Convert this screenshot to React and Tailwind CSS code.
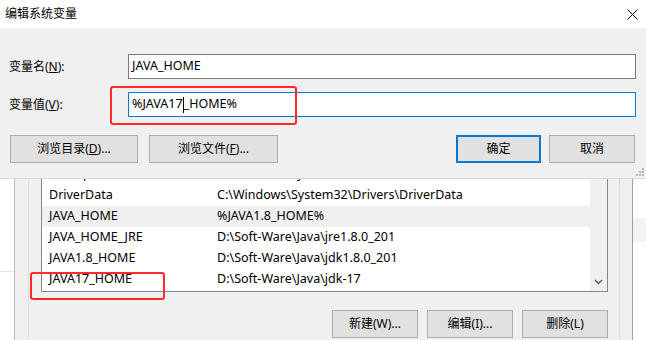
import React from 'react';

const font = "font-['Noto_Sans','Noto_Sans_CJK_SC',sans-serif]";

const rows = [
  ['ComSpec', 'C:\\Windows\\system32\\cmd.exe'],
  ['DriverData', 'C:\\Windows\\System32\\Drivers\\DriverData'],
  ['JAVA_HOME', '%JAVA1.8_HOME%', true],
  ['JAVA_HOME_JRE', 'D:\\Soft-Ware\\Java\\jre1.8.0_201'],
  ['JAVA1.8_HOME', 'D:\\Soft-Ware\\Java\\jdk1.8.0_201'],
  ['JAVA17_HOME', 'D:\\Soft-Ware\\Java\\jdk-17'],
];

const Btn = ({ children, w, primary }) => (
  <div
    className={`h-[28px] ${w} flex items-center justify-center bg-[#e1e1e1] text-[12px] text-black ${
      primary ? 'border-2 border-[#0078d7]' : 'border border-[#adadad]'
    }`}
  >
    {children}
  </div>
);

export default function App() {
  return (
    <div className={`w-[646px] h-[340px] relative overflow-hidden bg-white text-black ${font}`}>
      {/* Dialog */}
      <div className="h-[28px] bg-white flex items-center justify-between pl-[5px] pr-[8px]">
        <span className="text-[12px]">编辑系统变量</span>
        <svg width="11" height="11" viewBox="0 0 11 11" className="mr-[0px]">
          <path d="M0.5 0.5L10.5 10.5M10.5 0.5L0.5 10.5" stroke="#000" strokeWidth="1" />
        </svg>
      </div>
      <div className="h-[151px] bg-[#f0f0f0] border-b border-[#d9d9d9] pt-[26px] relative">
        <div className="flex items-center">
          <div className="w-[128px] pl-[9px] text-[12px]">
            变量名(<u>N</u>):
          </div>
          <div className="flex-1 mr-[10px] h-[25px] bg-white border border-[#7a7a7a] flex items-center pl-[3px] text-[12.5px]">
            JAVA_HOME
          </div>
        </div>
        <div className="flex items-center mt-[13px]">
          <div className="w-[128px] pl-[9px] text-[12px]">
            变量值(<u>V</u>):
          </div>
          <div className="flex-1 mr-[10px] h-[25px] bg-white border border-[#0078d7] flex items-center pl-[3px] text-[12.5px]">
            %JAVA17<span className="inline-block w-0 h-[16px] border-l border-black" />_HOME%
          </div>
        </div>
        <div className="flex items-center mt-[18px] pl-[10px] pr-[11px]">
          <Btn w="w-[128px]">
            浏览目录(<u>D</u>)...
          </Btn>
          <div className="ml-[11px]">
            <Btn w="w-[129px]">
              浏览文件(<u>F</u>)...
            </Btn>
          </div>
          <div className="ml-auto flex gap-[8px]">
            <Btn w="w-[85px]" primary>
              确定
            </Btn>
            <Btn w="w-[86px]">取消</Btn>
          </div>
        </div>
        {/* resize grip */}
        <svg width="10" height="10" viewBox="0 0 10 10" className="absolute right-[1px] bottom-[1px]">
          <rect x="7" y="1" width="2" height="2" fill="#b5b5b5" />
          <rect x="4" y="4" width="2" height="2" fill="#b5b5b5" />
          <rect x="7" y="4" width="2" height="2" fill="#b5b5b5" />
          <rect x="1" y="7" width="2" height="2" fill="#b5b5b5" />
          <rect x="4" y="7" width="2" height="2" fill="#b5b5b5" />
          <rect x="7" y="7" width="2" height="2" fill="#b5b5b5" />
        </svg>
      </div>

      {/* Background window */}
      <div className="h-[161px] flex">
        <div className="w-[14px] bg-white">
          <div className="h-[93px] border-b border-[#e3e3e3]" />
        </div>
        <div className="w-[13px] border-l border-[#b9b9b9] bg-[#f0f0f0] box-content" />
        <div className="w-[12px] border-l border-[#e0e0e0] bg-[#f0f0f0] box-content" />
        <div className="w-[567px] bg-[#f0f0f0] flex flex-col">
          <div className="h-[113px] bg-white border-l border-r border-b border-[#828790] flex overflow-hidden">
            <div className="flex-1 -mt-[15px]">
              {rows.map(([name, val, hl]) => (
                <div
                  key={name}
                  className={`h-[21px] flex items-center text-[12.5px] ${hl ? 'bg-[#f0f0f0]' : ''}`}
                >
                  <span className="w-[175px] pl-[7px]">{name}</span>
                  <span>{val}</span>
                </div>
              ))}
            </div>
            <div className="w-[17px] bg-[#f0f0f0] flex flex-col justify-end items-center pb-[6px]">
              <svg width="9" height="6" viewBox="0 0 9 6">
                <path d="M1 1L4.5 4.5L8 1" stroke="#606060" strokeWidth="1.5" fill="none" />
              </svg>
            </div>
          </div>
          <div className="flex justify-end gap-[9px] mt-[18px]">
            <Btn w="w-[86px]">新建(W)...</Btn>
            <Btn w="w-[86px]">编辑(I)...</Btn>
            <Btn w="w-[86px]">删除(L)</Btn>
          </div>
        </div>
        <div className="w-[11px] bg-[#f0f0f0]" />
        <div className="w-[12px] border-l border-[#d8d8d8] bg-[#f0f0f0] box-content" />
        <div className="flex-1 border-l border-[#a0a0a0] bg-white pt-[39px]">
          <div className="h-[24px] bg-[#f3f3f3]" />
        </div>
      </div>

      {/* Red annotation boxes */}
      <div className="absolute left-[110px] top-[86px] w-[187px] h-[39px] border-2 border-[#ff2b2b] rounded-[3px]" />
      <div className="absolute left-[30px] top-[272px] w-[135px] h-[28px] border-2 border-[#ff2b2b] rounded-[3px]" />
    </div>
  );
}
